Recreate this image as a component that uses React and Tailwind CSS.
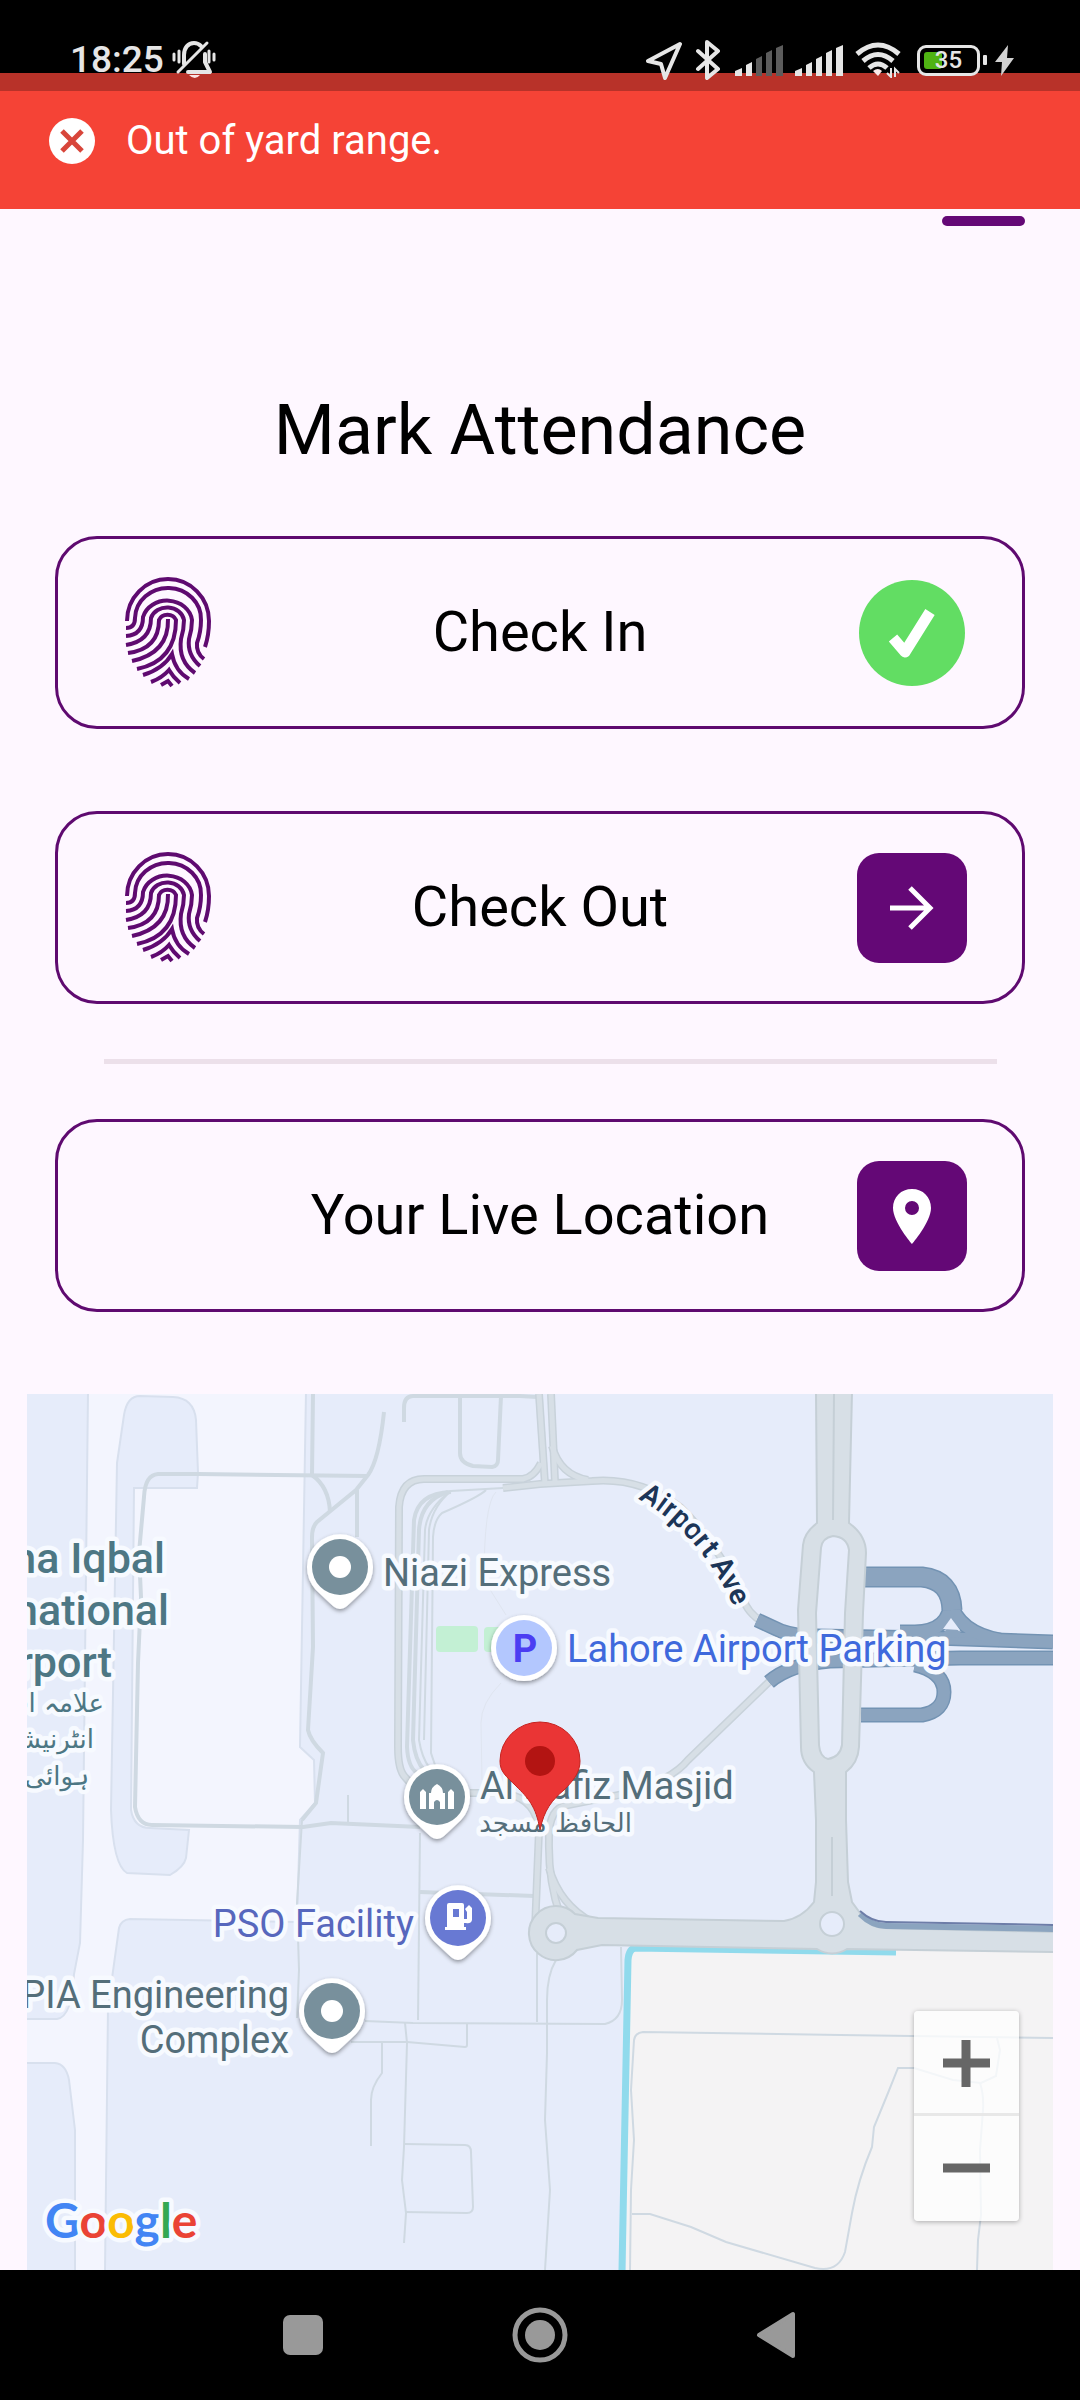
import { useState } from "react";

const PURPLE = "#640876";

function BellOffIcon() {
  return (
    <svg className="h-[40px] w-[44px]" viewBox="0 0 44 40" fill="none" stroke="#e6e6e6" strokeWidth="4" strokeLinecap="round" strokeLinejoin="round">
      <path d="M12 24V15C12 8 16 3 22 3c3 0 5 1 7 3" />
      <path d="M33 14v8l5 10H16" />
      <path d="M6 32L35 3" strokeWidth="3" />
      <path d="M17 35h11q-5 6-11 0z" fill="#fbe3e3" stroke="none" />
      <path d="M2 14v6M7 11v11M37 11v11M42 14v6" strokeWidth="3" />
    </svg>
  );
}

function LocationArrowIcon() {
  return (
    <svg className="h-[40px] w-[38px]" viewBox="0 0 38 40" fill="none" stroke="#e6e6e6" strokeWidth="4" strokeLinejoin="round">
      <path d="M35 4L3 21l13 3 4 14z" />
    </svg>
  );
}

function BluetoothIcon() {
  return (
    <svg className="h-[40px] w-[28px]" viewBox="0 0 28 40" fill="none" stroke="#e6e6e6" strokeWidth="4" strokeLinecap="round" strokeLinejoin="round">
      <path d="M3 11l20 18-11 9V2l11 9L3 29" />
    </svg>
  );
}

function SignalIcon({ level }) {
  const bars = [
    "M0 31v-5l7-3v8z",
    "M11 31V20l6-3v14z",
    "M21 31V14l6-3v20z",
    "M31 31V8l6-3v26z",
    "M41 31V3l7-3v31z",
  ];
  return (
    <svg className="h-[31px] w-[48px]" viewBox="0 0 48 31">
      {bars.map((d, i) => (
        <path key={d} d={d} fill={i < level ? "#e6e6e6" : "#5c5c5c"} />
      ))}
    </svg>
  );
}

function WifiIcon() {
  return (
    <svg className="h-[36px] w-[46px]" viewBox="0 0 46 36" fill="none" stroke="#e6e6e6" strokeWidth="5">
      <path d="M2 12Q23-6 44 12" />
      <path d="M8 19Q23 6 38 19" />
      <path d="M14 26Q23 18 32 26" />
      <path d="M18 29q5-4 9 0l-4 5z" fill="#fbe9e9" stroke="none" />
      <path d="M36 26v9l-4-4M40 35v-8l4 4" strokeWidth="2" />
    </svg>
  );
}

function StatusBar() {
  return (
    <div className="flex h-[91px] items-center justify-between bg-[linear-gradient(#000_73px,#b83229_73px)] pr-[66px] pl-[70px] pt-[29px]">
      <div className="flex items-center gap-2">
        <span className="text-[37px] leading-[44px] font-medium text-[#e6e6e6]">18:25</span>
        <BellOffIcon />
      </div>
      <div className="flex items-center gap-3">
        <LocationArrowIcon />
        <BluetoothIcon />
        <SignalIcon level={2} />
        <SignalIcon level={5} />
        <WifiIcon />
        <div className="flex items-center gap-[3px] pl-1">
          <div className="relative flex h-[31px] w-[63px] items-center justify-center rounded-[9px] border-3 border-[#e6e6e6] bg-black">
            <span className="absolute inset-y-[4px] left-[4px] w-[18px] rounded-[3px] bg-[#4fb313]" />
            <span className="relative text-[24px] leading-[24px] font-medium text-[#e6e6e6]">35</span>
          </div>
          <span className="h-[10px] w-[4px] rounded-[1px] bg-[#e6e6e6]" />
          <svg className="ml-[5px] h-[31px] w-[19px]" viewBox="0 0 19 31" fill="#d2d2d2">
            <path d="M13 0L0 17h7L6 31l13-18h-7z" />
          </svg>
        </div>
      </div>
    </div>
  );
}

function Toast({ message }) {
  return (
    <div role="alert" className="flex h-[118px] items-center gap-[30px] bg-[#f54336] px-[48px] pb-[18px]">
      <svg className="h-[48px] w-[48px]" viewBox="0 0 48 48">
        <circle cx="24" cy="24" r="23" fill="#fff" />
        <path d="M14 14l20 20M34 14L14 34" stroke="#d8453a" strokeWidth="5" />
      </svg>
      <p className="text-[40px] leading-[48px] text-white">{message}</p>
    </div>
  );
}

function FingerprintIcon() {
  return (
    <svg className="h-[111px] w-[86px]" viewBox="0 0 86 111" fill="none" stroke="#5f0a70" strokeWidth="4">
      <path d="M2 44A41 42 0 0 1 84 44Q84 58 80 70" />
      <path d="M1 51Q10 51 10 41A33 31 0 0 1 76 43Q76 55 72 66Q71 76 79 82" />
      <path d="M1 59Q18 58 18 40A25 22 0 0 1 67 43Q67 52 64 62Q62 78 75 89" />
      <path d="M1 68Q26 64 26 41A17 15 0 0 1 59 43Q59 52 56 62Q53 84 70 96" />
      <path d="M3 76Q34 72 34 43A9 8 0 0 1 51 43Q51 84 12 92" />
      <path d="M43 42Q44 76 7 84" />
      <path d="M18 98Q38 92 47 77Q50 94 64 102" />
      <path d="M26 105Q37 101 44 93Q48 100 55 106" />
      <path d="M36 108L43 104L47 109" />
    </svg>
  );
}

function CheckBadge() {
  return (
    <svg className="h-[110px] w-[110px]" viewBox="0 0 110 110">
      <circle cx="55" cy="55" r="53" fill="#62dd63" />
      <path d="M36 60l12 14 25-40" fill="none" stroke="#fff" strokeWidth="11" strokeLinejoin="round" />
    </svg>
  );
}

function ArrowBadge() {
  return (
    <svg className="h-[110px] w-[110px] rounded-[22px] bg-[#640876]" viewBox="0 0 110 110" fill="none" stroke="#fff" strokeWidth="5">
      <path d="M33 55h41M53 35l20 20-20 20" />
    </svg>
  );
}

function PlaceBadge() {
  return (
    <svg className="h-[110px] w-[110px] rounded-[22px] bg-[#640876]" viewBox="0 0 110 110">
      <path
        d="M55 28C44 28 36 36 36 47c0 14 19 36 19 36s19-22 19-36c0-11-8-19-19-19zm0 12a7 7 0 1 1 0 14 7 7 0 0 1 0-14z"
        fill="#fff"
      />
    </svg>
  );
}

function ActionCard({ label, left, right, onClick }) {
  return (
    <button
      onClick={onClick}
      className="flex h-[193px] w-full items-center justify-between rounded-[42px] border-3 border-[#5f0a70] px-[55px]"
    >
      <span className="flex w-[110px] justify-center">{left}</span>
      <span className="pb-[2px] text-[56px] leading-[66px] text-black">{label}</span>
      {right}
    </button>
  );
}

function PoiPin({ x, y, color, children }) {
  return (
    <g transform={`translate(${x} ${y})`}>
      <path d="M-24 23L-7 39Q0 45 7 39L24 23A33 33 0 1 0-24 23z" fill="#fff" filter="url(#shadow)" />
      <circle r="28" fill={color} />
      {children}
    </g>
  );
}

function MapLabel({ className = "", children, ...props }) {
  return (
    <text stroke="#f7faff" strokeWidth="9" strokeLinejoin="round" paintOrder="stroke" className={className} {...props}>
      {children}
    </text>
  );
}

// runs the same road twice: darker casing below, lighter surface above
function Roads({ paths, width, fill, casing }) {
  return (
    <g fill="none">
      {paths.map((d) => (
        <path key={d} d={d} stroke={casing} strokeWidth={width} />
      ))}
      {paths.map((d) => (
        <path key={d} d={d} stroke={fill} strokeWidth={width - 3} />
      ))}
    </g>
  );
}

const serviceRoads = [
  "M368 1476L198 1474H158Q145 1475 144 1497L139 1553L141 1597L138 1663L135 1807Q138 1825 152 1825L303 1827L331 1823L420 1827",
  "M313 1394L312 1475Q329 1487 330 1512",
  "M384 1412Q379 1460 368 1475L356 1490L317 1522Q312 1527 312 1537L313 1647L308 1730Q310 1740 323 1753L316 1803L302 1820",
  "M357 1490V1537",
  "M404 1422V1408Q404 1396 413 1396H520L537 1397",
  "M460 1396V1453Q460 1463 473 1466L492 1467Q498 1466 498 1460L501 1396",
  "M451 1492Q418 1493 414 1520L407 1747Q408 1767 417 1773",
  "M448 1492Q421 1500 419 1530L413 1740Q415 1760 424 1770",
  "M420 1892L534 1896",
];

const lanes = [
  "M448 1493Q427 1510 425 1530L419 1740Q422 1758 429 1767",
  "M503 1488L451 1491Q432 1507 429 1530L424 1740",
  "M486 1490Q479 1497 442 1513Q434 1520 433 1537L431 1753L435 1765",
  "M348 1795V1825",
  "M302 1820L297 1903L299 1970L297 2018",
  "M420 1833L418 2020",
  "M365 2021L413 2023L605 2024Q622 2020 622 2000L621 1947",
  "M405 2023L407 2043L404 2147L402 2180L406 2213L404 2243",
  "M351 2042H407L465 2047Q467 2047 467 2045V2023",
  "M382 2043V2073Q371 2087 371 2100V2146",
  "M405 2144L465 2145Q471 2145 471 2152L473 2207Q473 2213 467 2213L405 2212",
  "M537 1953V2022",
  "M556 1960Q547 1975 547 2000V2053L545 2120L550 2190L545 2270",
  "M1053 2038L840 2035L643 2032Q635 2033 634 2040L631 2090L634 2140L631 2190L630 2270",
  "M632 2214H650L691 2227L726 2242L815 2268Q838 2273 845 2252L852 2213Q858 2180 872 2147L874 2127L888 2093L898 2068H914L953 2080L981 2083L996 2076L1000 2050L997 2038",
  "M980 2083Q984 2095 983 2110L980 2150L981 2215L978 2240L977 2270",
];

const apronIslands =
  "M117 1463L124 1415Q127 1396 140 1396L173 1397Q194 1398 196 1420L198 1473L197 1488H134L131 1810Q134 1828 150 1828L189 1830L186 1858Q184 1867 170 1875L127 1873Q113 1865 111 1810L117 1463z";

const avenues = [
  "M412 1785L405 1777Q398 1770 398 1747L399 1507Q401 1479 424 1479H523Q534 1477 541 1463",
  "M503 1488L540 1484L592 1481Q640 1477 680 1507Q715 1540 743 1598Q747 1613 764 1623",
  "M539 1394L545 1484",
  "M551 1394L555 1482",
  "M552 1446Q560 1475 588 1480",
  "M774 1677L688 1760Q680 1770 665 1778L619 1795L568 1805Q548 1808 549 1840Q548 1880 560 1915",
  "M549 1868Q560 1905 592 1922",
  "M470 1793H500Q536 1796 539 1830L535 1930",
];

const ramps = [
  "M757 1620L781 1631Q795 1636 815 1636L935 1638L1053 1642",
  "M769 1682Q790 1664 830 1661L960 1658H1053",
  "M861 1715H922Q944 1711 944 1692Q944 1672 915 1665",
  "M950 1600Q957 1632 1000 1640",
  "M951 1600Q950 1631 915 1632H900",
];

function LiveMap() {
  return (
    <div className="relative mx-[27px]">
      <svg
        className="block h-[876px] w-full font-[Roboto,sans-serif]"
        viewBox="27 1394 1026 876"
        preserveAspectRatio="xMidYMid slice"
        role="img"
        aria-label="Map of your live location"
      >
        <defs>
          <filter id="shadow" x="-30%" y="-30%" width="160%" height="160%">
            <feDropShadow dx="0" dy="2" stdDeviation="2" floodOpacity="0.4" />
          </filter>
          <path id="airport-ave" d="M638 1499C672 1517 710 1552 736 1612" />
        </defs>

        <rect x="27" y="1394" width="1026" height="876" fill="#e6ecfa" />

        {/* apron and taxiways */}
        <g stroke="#d8e0ee" strokeWidth="2">
          <path
            d="M88 1392H306L300 1747L314 1760L315 1803L300 1820L297 1922L130 1919Q121 1920 119 1928L108 2007L105 2272H75V2130L69 2080Q66 2064 55 2063H25V2019H57Q72 2017 74 1974L80 1943L83 1840z"
            fill="#f3f5fe"
          />
          <path d={apronIslands} fill="#e6ecfa" />
        </g>

        <rect x="436" y="1626" width="42" height="26" rx="4" fill="#c3f0d4" />
        <rect x="484" y="1627" width="30" height="25" rx="4" fill="#c3f0d4" />

        {/* open block south of the avenue */}
        <path d="M628 1948H1053V2270H626z" fill="#f4f3f4" />

        <g fill="none" stroke="#cfd9e2">
          {serviceRoads.map((d) => (
            <path key={d} d={d} strokeWidth="4" />
          ))}
          {lanes.map((d) => (
            <path key={d} d={d} strokeWidth="2" />
          ))}
          <path d="M496 1492Q484 1503 484 1580L506 1615M501 1683Q481 1703 481 1723L482 1780" stroke="#dfe5f0" strokeWidth="1" />
        </g>

        <path d="M896 1952L635 1948Q629 1949 628 1960L622 2270" fill="none" stroke="#90daec" strokeWidth="7" />

        <Roads paths={avenues} width={8} fill="#d7dfe6" casing="#c8d2da" />
        <Roads paths={ramps} width={15} fill="#8ba4bf" casing="#7393b3" />
        <Roads paths={["M858 1577H922Q951 1580 952 1610"]} width={21} fill="#8ba4bf" casing="#7393b3" />
        <path d="M938 1637Q947 1633 951 1618Q954 1630 968 1638z" fill="#8ba4bf" />
        <path d="M943 1629L951 1618L960 1630z" fill="#e6ecfa" />

        {/* main boulevard with the long median and both roundabouts */}
        <g stroke="#c5cfd6" strokeWidth="2" fill="#d7dfe6">
          <path
            fillRule="evenodd"
            d="M816 1392H852L849 1523Q866 1535 866 1553L863 1613L859 1747Q858 1763 846 1772V1820L848 1882L852 1902L860 1913Q868 1927 884 1928L1055 1932V1952L847 1949Q832 1958 817 1949L602 1945L577 1950A27 27 0 1 1 575 1914L598 1918L784 1921Q802 1918 814 1902L816 1882V1820L814 1772Q801 1763 801 1747L798 1610L803 1545Q804 1533 817 1523z
               M833 1536Q822 1538 821 1548L816 1613L819 1745Q820 1757 828 1759Q840 1757 842 1745L845 1613L849 1550Q847 1537 833 1536z"
          />
          <circle cx="556" cy="1933" r="10" fill="#e6ecfa" />
          <circle cx="832" cy="1924" r="12" fill="#e6ecfa" />
          <path d="M834 1394L833 1520M832 1837V1896" fill="none" />
        </g>
        <path d="M860 1914Q872 1926 886 1926L1053 1929" fill="none" stroke="#8ba4bf" strokeWidth="6" />
        <path d="M860 1911Q872 1922 886 1922L1053 1925" fill="none" stroke="#6d7da8" strokeWidth="2" />

        <MapLabel className="text-[29px] font-semibold" fill="#1c3557">
          <textPath href="#airport-ave">Airport Ave</textPath>
        </MapLabel>

        <g className="text-[43px] font-medium" fill="#4d7784">
          <MapLabel x="165" y="1573" textAnchor="end">Allama Iqbal</MapLabel>
          <MapLabel x="169" y="1625" textAnchor="end">International</MapLabel>
          <MapLabel x="112" y="1677" textAnchor="end">Airport</MapLabel>
        </g>
        <g className="text-[26px] font-['DejaVu_Sans',sans-serif]" fill="#4d7784" direction="rtl">
          <MapLabel x="104" y="1712">علامہ اقبال</MapLabel>
          <MapLabel x="94" y="1748">انٹرنیشنل</MapLabel>
          <MapLabel x="89" y="1785">ہوائی</MapLabel>
        </g>

        <g className="text-[38px]" fill="#546e7a">
          <MapLabel x="383" y="1586">Niazi Express</MapLabel>
          <MapLabel x="567" y="1662" fill="#3f69dc">Lahore Airport Parking</MapLabel>
          <MapLabel x="480" y="1799">Al Hafiz Masjid</MapLabel>
          <MapLabel x="414" y="1937" textAnchor="end" fill="#5767bd">PSO Facility</MapLabel>
          <MapLabel x="289" y="2008" textAnchor="end">PIA Engineering</MapLabel>
          <MapLabel x="289" y="2053" textAnchor="end">Complex</MapLabel>
        </g>
        <MapLabel className="text-[26px] font-['DejaVu_Sans',sans-serif]" x="632" y="1832" fill="#546e7a" direction="rtl">الحافظ مسجد</MapLabel>

        <PoiPin x={340} y={1567} color="#78909c">
          <circle r="11" fill="#fff" />
        </PoiPin>
        <PoiPin x={332} y={2011} color="#78909c">
          <circle r="11" fill="#fff" />
        </PoiPin>
        <PoiPin x={437} y={1797} color="#78909c">
          <path d="M-17 12V-5l3-3 3 3v17zM11 12V-5l3-3 3 3v17zM-8 12V-4h2q0-6 6-9 6 3 6 9h2v16H3V5q-3-4-6 0v7z" fill="#fff" />
        </PoiPin>
        <PoiPin x={458} y={1918} color="#6879d3">
          <path d="M-13 12v-3h2v-22q0-2 2-2H4q2 0 2 2V1h3v-7L7-9l4-4 3 3V2q-1 4-6 3H6v4h2v3zM-5-9v8h6v-8z" fill="#fff" fillRule="evenodd" />
        </PoiPin>

        <g transform="translate(524 1648)">
          <circle r="33" fill="#fff" filter="url(#shadow)" />
          <circle r="28" fill="#b3c7fe" />
          <text x="1" y="14" textAnchor="middle" className="text-[38px] font-bold" fill="#4b3df2">P</text>
        </g>

        <path
          d="M540 1830C536 1806 528 1798 516 1786C506 1776 500 1772 500 1761A40 39 0 0 1 580 1761C580 1772 574 1780 564 1790C552 1800 544 1810 540 1830z"
          fill="#ea3535"
          stroke="#c5221f"
          strokeWidth="1"
        />
        <circle cx="540" cy="1761" r="15" fill="#b31412" />

        <MapLabel x="45" y="2238" className="text-[48px] font-bold font-[Lato,sans-serif]">
          <tspan fill="#4285f4">G</tspan>
          <tspan fill="#ea4335">o</tspan>
          <tspan fill="#fbbc04">o</tspan>
          <tspan fill="#4285f4">g</tspan>
          <tspan fill="#34a853">l</tspan>
          <tspan fill="#ea4335">e</tspan>
        </MapLabel>
      </svg>

      {/* zoom control */}
      <div className="absolute right-[34px] bottom-[49px] flex w-[105px] flex-col rounded-[4px] bg-white/75 shadow-[0_1px_5px_rgba(0,0,0,0.3)]">
        <button aria-label="Zoom in" className="flex h-[105px] items-center justify-center border-b-3 border-[#e8e8e8] pt-[3px]">
          <svg className="h-[47px] w-[47px]" viewBox="0 0 47 47" fill="none" stroke="#666" strokeWidth="9">
            <path d="M0 23h47M23 0v47" />
          </svg>
        </button>
        <button aria-label="Zoom out" className="flex h-[105px] items-center justify-center">
          <svg className="h-[47px] w-[47px]" viewBox="0 0 47 47" stroke="#666" strokeWidth="9">
            <path d="M0 23h47" />
          </svg>
        </button>
      </div>
    </div>
  );
}

function NavBar() {
  return (
    <nav className="flex h-[130px] items-center justify-center gap-[186px] bg-black">
      <button aria-label="Recent apps">
        <svg className="h-[56px] w-[46px]" viewBox="0 0 46 56" fill="#999">
          <rect x="3" y="8" width="40" height="40" rx="7" />
        </svg>
      </button>
      <button aria-label="Home">
        <svg className="h-[56px] w-[56px]" viewBox="0 0 56 56">
          <circle cx="28" cy="28" r="25" fill="none" stroke="#999" strokeWidth="5" />
          <circle cx="28" cy="28" r="15" fill="#999" />
        </svg>
      </button>
      <button aria-label="Back">
        <svg className="h-[56px] w-[46px]" viewBox="0 0 46 56" fill="#999" stroke="#999" strokeWidth="4" strokeLinejoin="round">
          <path d="M5 28L39 7v42z" />
        </svg>
      </button>
    </nav>
  );
}

export default function App() {
  const [status, setStatus] = useState("Out of yard range.");

  return (
    <div className="min-h-screen bg-[#fef7ff] font-[Roboto,sans-serif]">
      <StatusBar />
      <Toast message={status} />

      <main>
        <div className="flex justify-end px-[55px] pt-[7px]">
          <button aria-label="Menu" className="block">
            <svg className="block h-[10px] w-[83px]" viewBox="0 0 83 10">
              <rect width="83" height="10" rx="5" fill={PURPLE} />
            </svg>
          </button>
        </div>

        <div className="px-[55px] pt-[164px]">
          <h1 className="mb-[66px] text-center text-[70px] leading-[80px] text-black">Mark Attendance</h1>

          <div className="flex flex-col gap-[82px]">
            <ActionCard
              label="Check In"
              left={<FingerprintIcon />}
              right={<CheckBadge />}
              onClick={() => setStatus("Out of yard range.")}
            />
            <ActionCard
              label="Check Out"
              left={<FingerprintIcon />}
              right={<ArrowBadge />}
              onClick={() => setStatus("Out of yard range.")}
            />
          </div>

          <hr className="mt-[55px] mr-[28px] mb-[55px] ml-[49px] h-[5px] border-0 bg-[#ece0ea]" />

          <ActionCard label="Your Live Location" right={<PlaceBadge />} />
        </div>

        <div className="pt-[82px]">
          <LiveMap />
        </div>
      </main>

      <NavBar />
    </div>
  );
}
